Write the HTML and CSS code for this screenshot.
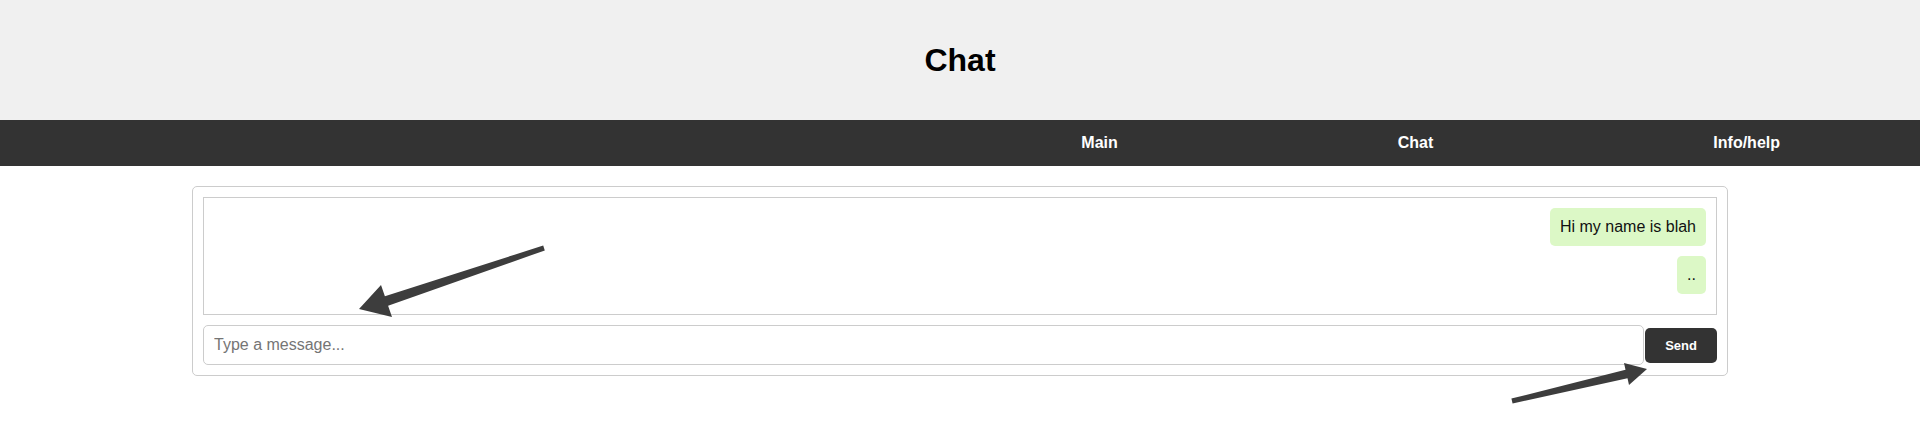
FILE: index.html
```html
<!DOCTYPE html>
<html lang="en">
<head>
<meta charset="utf-8">
<title>Chat</title>
<link rel="stylesheet" href="styles.css">
</head>
<body>
<header class="site-header">
  <h1 class="site-title">Chat</h1>
</header>
<nav class="site-nav">
  <ul class="nav-list">
    <li class="nav-item"><a class="nav-link" href="#">Main</a></li>
    <li class="nav-item"><a class="nav-link" href="#">Chat</a></li>
    <li class="nav-item"><a class="nav-link" href="#">Info/help</a></li>
  </ul>
</nav>
<main class="chat">
  <div class="messages">
    <div class="bubble">Hi my name is blah</div>
    <div class="bubble">..</div>
  </div>
  <div class="composer">
    <input class="composer-input" type="text" placeholder="Type a message...">
    <button class="composer-send" type="button">Send</button>
  </div>
</main>
<svg class="annotations" width="1920" height="438" viewBox="0 0 1920 438" aria-hidden="true">
  <polygon class="arrow" points="543.2,245.6 384.9,296.2 381,285 359,309 392,317 388.1,305.8 544.8,250.4"/>
  <polygon class="arrow" points="1511.4,398.6 1625.5,369.7 1624,363 1647,369 1629,385 1627.5,378.3 1512.6,403.4"/>
</svg>
</body>
</html>
```
FILE: styles.css
```css
html, body {
  margin: 0;
  padding: 0;
}
body {
  font-family: "Liberation Sans", Arial, sans-serif;
  background: #ffffff;
  color: #000;
  position: relative;
  min-height: 438px;
}
.site-header {
  height: 120px;
  background: #f0f0f0;
  display: flex;
  align-items: center;
  justify-content: center;
}
.site-title {
  margin: 0;
  font-size: 32px;
  font-weight: bold;
}
.site-nav {
  background: #333333;
}
.nav-list {
  list-style: none;
  margin: 0;
  padding: 0;
  display: flex;
  justify-content: flex-end;
}
.nav-item {
  padding: 0 140px;
}
.nav-link {
  display: block;
  padding: 14px 0;
  color: #ffffff;
  font-weight: bold;
  font-size: 16px;
  text-decoration: none;
}
.chat {
  width: 80%;
  margin: 20px auto;
  border: 1px solid #cccccc;
  border-radius: 5px;
  padding: 10px;
  box-sizing: border-box;
  display: flex;
  flex-direction: column;
  gap: 10px;
}
.messages {
  border: 1px solid #cccccc;
  padding: 10px;
  display: flex;
  flex-direction: column;
  align-items: flex-end;
}
.bubble {
  background: #dcf8c6;
  border-radius: 5px;
  padding: 10px;
  font-size: 16px;
  line-height: 18px;
  margin-bottom: 10px;
  color: #111;
}
.composer {
  display: flex;
  align-items: center;
  gap: 1px;
}
.composer-input {
  flex: 1;
  font-family: "Liberation Sans", Arial, sans-serif;
  font-size: 16px;
  padding: 10px;
  border: 1px solid #cccccc;
  border-radius: 5px;
  outline: none;
}
.composer-input::placeholder {
  color: #757575;
}
.composer-send {
  font-family: "Liberation Sans", Arial, sans-serif;
  font-size: 13px;
  font-weight: bold;
  padding: 10px 20px;
  background: #333333;
  color: #ffffff;
  border: none;
  border-radius: 5px;
  line-height: 15px;
}
.annotations {
  position: absolute;
  left: 0;
  top: 0;
  pointer-events: none;
}
.arrow {
  fill: #3d3d3d;
}
```
